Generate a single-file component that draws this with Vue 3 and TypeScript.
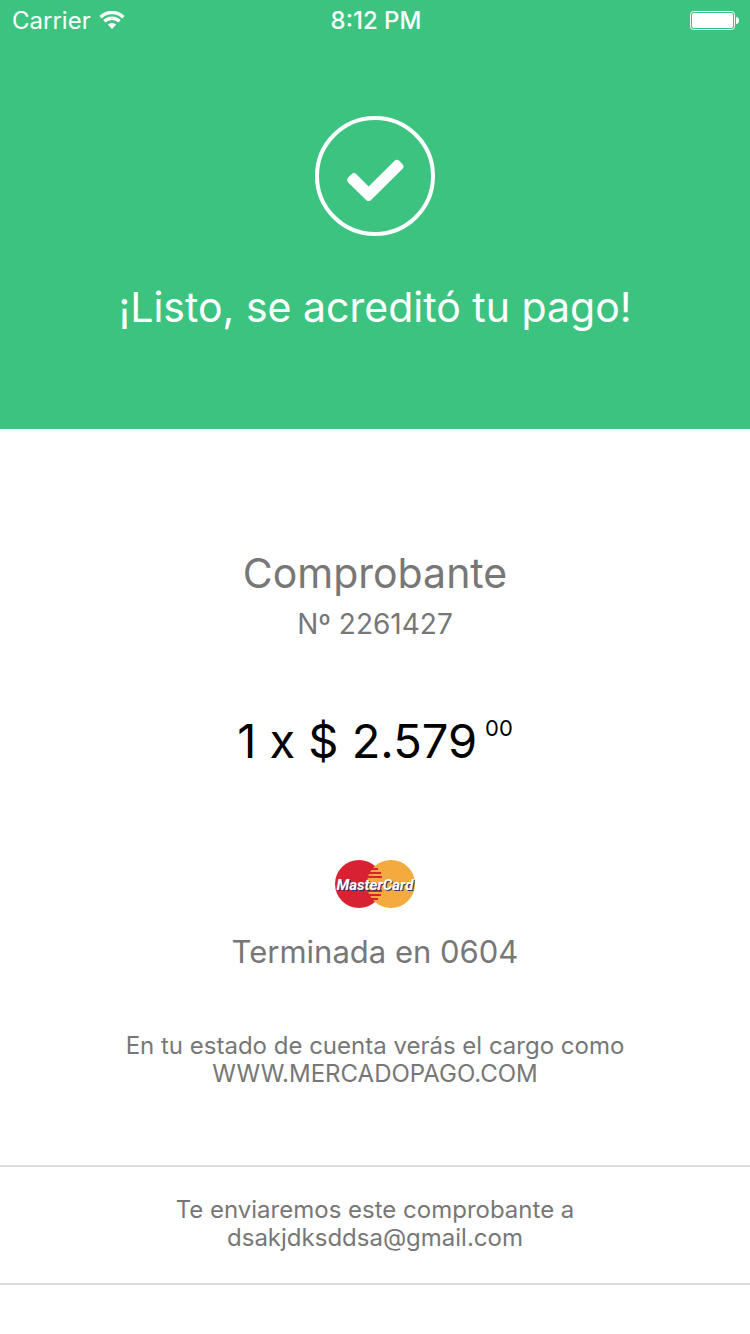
<script setup lang="ts">
interface Payment {
  receipt: string
  installments: number
  amount: string
  cents: string
  lastDigits: string
  statement: string
  email: string
}

const payment: Payment = {
  receipt: '2261427',
  installments: 1,
  amount: '2.579',
  cents: '00',
  lastDigits: '0604',
  statement: 'WWW.MERCADOPAGO.COM',
  email: 'dsakjdksddsa@gmail.com',
}
</script>

<template>
  <div class="screen">
    <header class="header">
      <div class="status-bar">
        <div class="carrier">
          <span>Carrier</span>
          <svg class="wifi" viewBox="0 0 26 20" width="26" height="20" aria-hidden="true">
            <g fill="none" stroke="#fff" stroke-width="3.4">
              <path d="M1.600 6.200A16.400 16.400 0 0 1 24.400 6.200" />
              <path d="M5.400 10.300A10.900 10.900 0 0 1 20.600 10.300" />
            </g>
            <path d="M8.800 13.600A6 6 0 0 1 17.200 13.600L13 18Z" fill="#fff" />
          </svg>
        </div>
        <span class="time">8:12 PM</span>
        <div class="power">
          <svg viewBox="0 0 50 22" width="50" height="22" aria-hidden="true">
            <rect x="0.5" y="1.5" width="44" height="18" rx="3" fill="none" stroke="#fff" />
            <rect x="2" y="3" width="41" height="15" rx="2" fill="#fff" />
            <path d="M46 7C48 7 49 8.500 49 10.500S48 14 46 14Z" fill="#fff" />
          </svg>
        </div>
      </div>
      <svg class="success" viewBox="0 0 120 120" width="120" height="120" aria-hidden="true">
        <circle cx="60" cy="60" r="58" fill="none" stroke="#fff" stroke-width="4" />
        <path
          d="M33.200 61.600L36.800 58Q39 56 41.200 58L53.600 70.400L79.600 44.800Q82 42.800 84.200 44.800L87.400 48Q89.600 50.400 87.600 52.800L55.800 84.200Q53.600 86 51.400 84.200L33.200 66.400Q31 64 33.200 61.600Z"
          fill="#fff"
        />
      </svg>
      <h1 class="title">¡Listo, se acreditó tu pago!</h1>
    </header>

    <main>
      <section class="receipt">
        <h2 class="heading">Comprobante</h2>
        <p class="number">Nº {{ payment.receipt }}</p>
        <p class="amount">
          <span>{{ payment.installments }} x $ {{ payment.amount }}</span>
          <span class="cents">{{ payment.cents }}</span>
        </p>
        <svg class="brand" viewBox="0 0 80 48" width="80" height="48" role="img" aria-label="MasterCard">
          <circle cx="24" cy="24" r="24" fill="#d92231" />
          <circle cx="56" cy="24" r="24" fill="#f4aa3f" />
          <g stroke="#d92231" stroke-width="2">
            <path d="M36 9H43M34 13H46M33 17H47M33 31H47M34 35H46M36 39H43" />
          </g>
          <g class="brand-name" text-anchor="middle">
            <text x="41" y="31" fill="#26336b">MasterCard</text>
            <text x="40" y="30" fill="#fff">MasterCard</text>
          </g>
        </svg>
        <p class="card">Terminada en {{ payment.lastDigits }}</p>
        <p class="note">
          En tu estado de cuenta verás el cargo como<br />{{ payment.statement }}
        </p>
      </section>
      <section class="delivery">
        <p>Te enviaremos este comprobante a<br />{{ payment.email }}</p>
      </section>
    </main>
  </div>
</template>

<style>
body {
  margin: 0;
  background: #fff;
}
</style>

<style scoped>
.screen {
  min-height: 100vh;
  background: #fff;
  color: #777;
  font-family: Inter, "Liberation Sans", sans-serif;
  font-size: 24px;
  line-height: 28px;
  text-align: center;
}

h1,
h2,
p {
  margin: 0;
  font-weight: 400;
}

.header {
  display: flex;
  flex-direction: column;
  align-items: center;
  padding-bottom: 95px;
  background: #3dc380;
  color: #fff;
}

.status-bar {
  display: grid;
  grid-template-columns: 1fr auto 1fr;
  align-items: center;
  align-self: stretch;
  height: 42px;
  padding: 0 10px 0 12px;
}

.carrier {
  display: flex;
  align-items: center;
  gap: 8px;
}

.time {
  font-weight: 500;
}

.power {
  display: flex;
  justify-content: flex-end;
}

.success {
  margin: 74px 0 44px;
}

.title,
.heading {
  font-size: 41px;
  line-height: 54px;
}

.receipt {
  display: flex;
  flex-direction: column;
  align-items: center;
  padding: 117px 24px 77px;
}

.number {
  margin-top: 7px;
  font-size: 28px;
  line-height: 34px;
}

.amount {
  display: flex;
  align-items: flex-start;
  gap: 8px;
  margin-top: 71px;
  color: #000;
  font-size: 47px;
  line-height: 58px;
}

.cents {
  font-size: 22px;
  line-height: 32px;
}

.brand {
  margin-top: 90px;
}

.brand-name {
  font: italic 700 15px Roboto, sans-serif;
}

.card {
  margin-top: 24px;
  font-size: 31px;
  line-height: 40px;
}

.note {
  margin-top: 60px;
}

.delivery {
  padding: 29px 24px 31px;
  border-top: 2px solid #dcdcdc;
  border-bottom: 2px solid #dcdcdc;
}
</style>
